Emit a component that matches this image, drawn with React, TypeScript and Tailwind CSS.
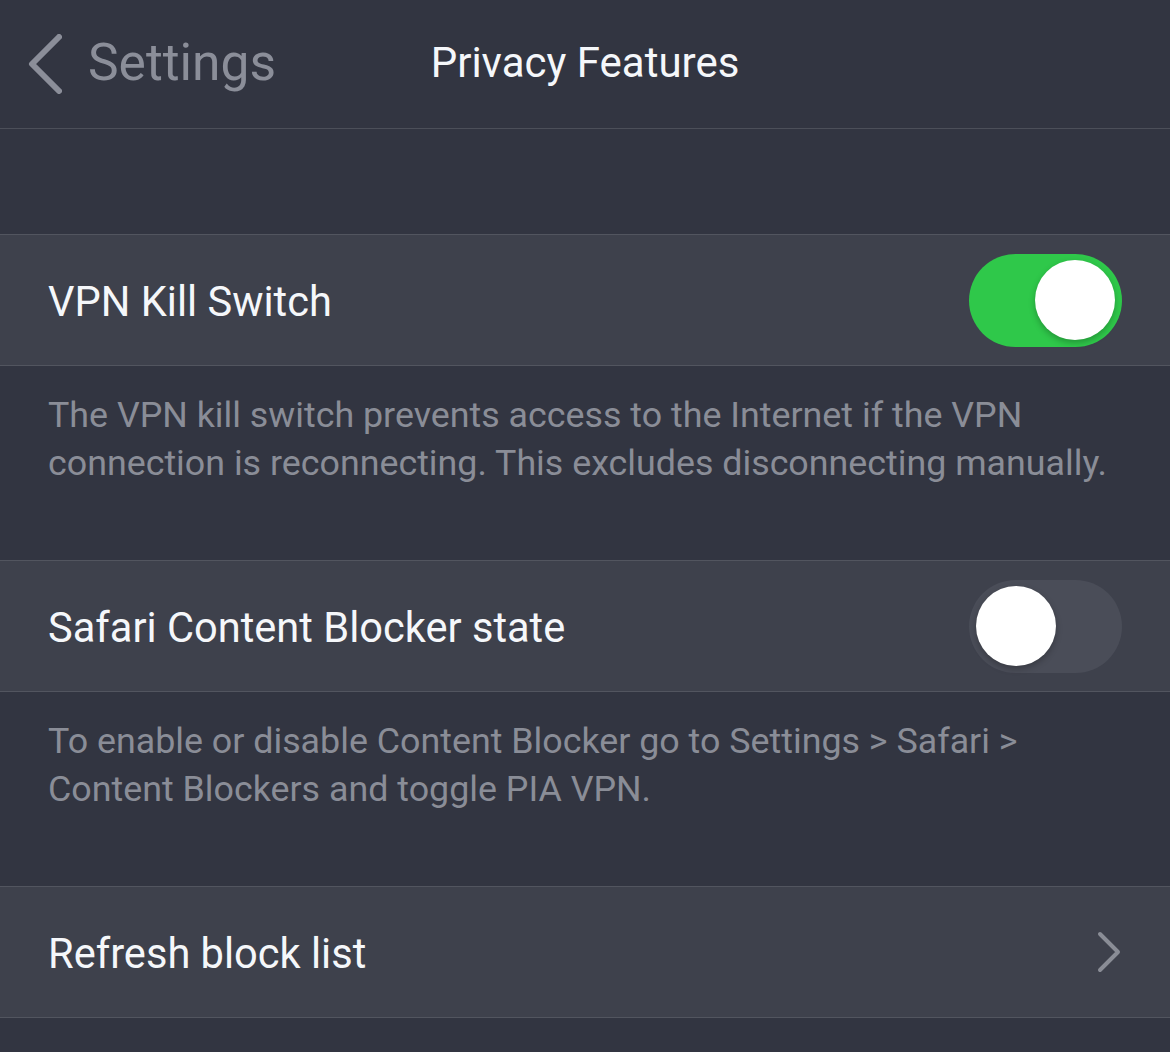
import React from "react";

function Toggle({ on }: { on: boolean }) {
  return (
    <div
      className={
        "w-[153px] h-[93px] rounded-full flex items-center px-[7px] " +
        (on ? "bg-[#2fc84a] justify-end" : "bg-[#4a4d58] justify-start")
      }
    >
      <div className="w-[80px] h-[80px] rounded-full bg-white shadow-[0_3px_6px_rgba(0,0,0,0.25)]" />
    </div>
  );
}

function Row({ label, right }: { label: string; right: React.ReactNode }) {
  return (
    <div className="h-[132px] bg-[#3e414c] border-y border-[#52555f] flex items-center justify-between pl-[48px] pr-[48px]">
      <span className="text-[41.6px] text-[#f5f7fa] leading-none mt-[4px]">{label}</span>
      {right}
    </div>
  );
}

function Desc({ children }: { children: React.ReactNode }) {
  return (
    <div className="pt-[25px] pb-[73px] pl-[48px] pr-[40px] text-[35.8px] leading-[48px] text-[#8a8d97]">
      {children}
    </div>
  );
}

export default function App() {
  return (
    <div
      className="w-[1170px] h-[1052px] bg-[#323541] overflow-hidden"
      style={{ fontFamily: "Roboto, 'Noto Sans', sans-serif" }}
    >
      <div className="relative h-[129px] border-b border-[#4c4f59] flex items-center">
        <div className="flex items-center pl-[28px] gap-[26px] text-[#8b8e99]">
          <svg width="34" height="60" viewBox="0 0 34 60" fill="none">
            <path d="M31 3 L4 30 L31 57" stroke="#8b8e99" strokeWidth="6" strokeLinecap="round" strokeLinejoin="round" />
          </svg>
          <span className="text-[51.5px] leading-none -mt-[3px]">Settings</span>
        </div>
        <div className="absolute left-0 right-0 top-0 h-[128px] flex items-center justify-center pointer-events-none">
          <span className="text-[42px] text-[#f5f7fa] leading-none -mt-[3px]">Privacy Features</span>
        </div>
      </div>
      <div className="h-[105px]" />
      <Row label="VPN Kill Switch" right={<Toggle on />} />
      <Desc>
        The VPN kill switch prevents access to the Internet if the VPN connection is reconnecting. This excludes disconnecting manually.
      </Desc>
      <Row label="Safari Content Blocker state" right={<Toggle on={false} />} />
      <Desc>
        To enable or disable Content Blocker go to Settings &gt; Safari &gt; Content Blockers and toggle PIA VPN.
      </Desc>
      <Row
        label="Refresh block list"
        right={
          <svg width="26" height="42" viewBox="0 0 26 42" fill="none">
            <path d="M4 3 L22 21 L4 39" stroke="#8a8d96" strokeWidth="4" strokeLinecap="round" strokeLinejoin="round" />
          </svg>
        }
      />
    </div>
  );
}
